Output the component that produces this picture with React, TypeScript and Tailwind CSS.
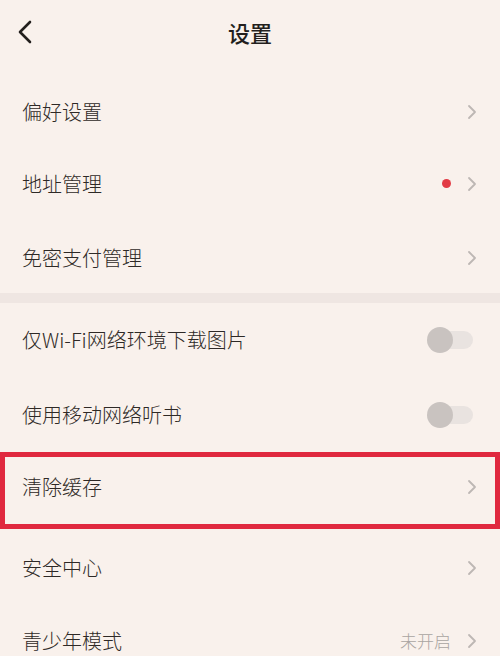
import type { ReactNode } from 'react';

const Chevron = () => (
  <svg width="10" height="16" viewBox="0 0 10 16" fill="none" className="shrink-0">
    <path d="M2 2l6 6-6 6" stroke="#bdb7b4" strokeWidth="1.8" strokeLinecap="round" strokeLinejoin="round" />
  </svg>
);

const Toggle = () => (
  <div className="relative h-[26px] w-[46px] shrink-0">
    <div className="absolute left-[4px] right-0 top-[4px] h-[18px] rounded-full bg-[#e9e3e0]" />
    <div className="absolute left-0 top-0 h-[26px] w-[26px] rounded-full bg-[#c9c3c0]" />
  </div>
);

type RowProps = {
  label: string;
  right?: ReactNode;
  height: string;
};

const Row = ({ label, right, height }: RowProps) => (
  <div className={`flex items-center justify-between pl-[22px] pr-[23px] ${height}`}>
    <span className="text-[20px] font-light leading-[28px] text-[#2e2926]">{label}</span>
    <div className="flex items-center">{right ?? <Chevron />}</div>
  </div>
);

export default function App() {
  return (
    <div
      className="h-[656px] w-[500px] overflow-hidden bg-[#f9f1ec]"
      style={{ fontFamily: '"Noto Sans CJK SC", "Noto Sans", sans-serif' }}
    >
      {/* Header */}
      <div className="relative flex h-16 items-center justify-center">
        <button className="absolute left-[17px] top-[20px]">
          <svg width="16" height="24" viewBox="0 0 16 24" fill="none">
            <path d="M13 2L3 12l10 10" stroke="#231f1d" strokeWidth="2.6" strokeLinecap="round" strokeLinejoin="round" />
          </svg>
        </button>
        <h1 className="text-[22px] font-medium leading-[30px] text-[#231f1d]">设置</h1>
      </div>

      <div className="pt-3">
        <Row label="偏好设置" height="h-[72px]" />
        <Row
          label="地址管理"
          height="h-[71px]"
          right={
            <>
              <span className="mr-[16px] h-[9px] w-[9px] rounded-full bg-[#e23b45]" />
              <Chevron />
            </>
          }
        />
        <Row label="免密支付管理" height="h-[74px] pt-1" />
      </div>

      {/* Section divider */}
      <div className="h-[10px] bg-[#efe6e2]" />

      <Row label="仅Wi-Fi网络环境下载图片" height="h-[74px] pr-[27px]" right={<Toggle />} />
      <Row label="使用移动网络听书" height="h-[75px] pr-[27px]" right={<Toggle />} />

      {/* Highlighted row */}
      <div className="flex h-[77px] items-start justify-between border-[5px] border-[#e0293f] pl-[17px] pr-[18px] pt-4">
        <span className="text-[20px] font-light leading-[28px] text-[#2e2926]">清除缓存</span>
        <div className="flex h-[28px] items-center">
          <Chevron />
        </div>
      </div>

      <Row label="安全中心" height="h-[78px]" />
      <Row
        label="青少年模式"
        height="h-[68px]"
        right={
          <>
            <span className="mr-[16px] text-[17px] font-light text-[#a9a4a1]">未开启</span>
            <Chevron />
          </>
        }
      />
    </div>
  );
}
